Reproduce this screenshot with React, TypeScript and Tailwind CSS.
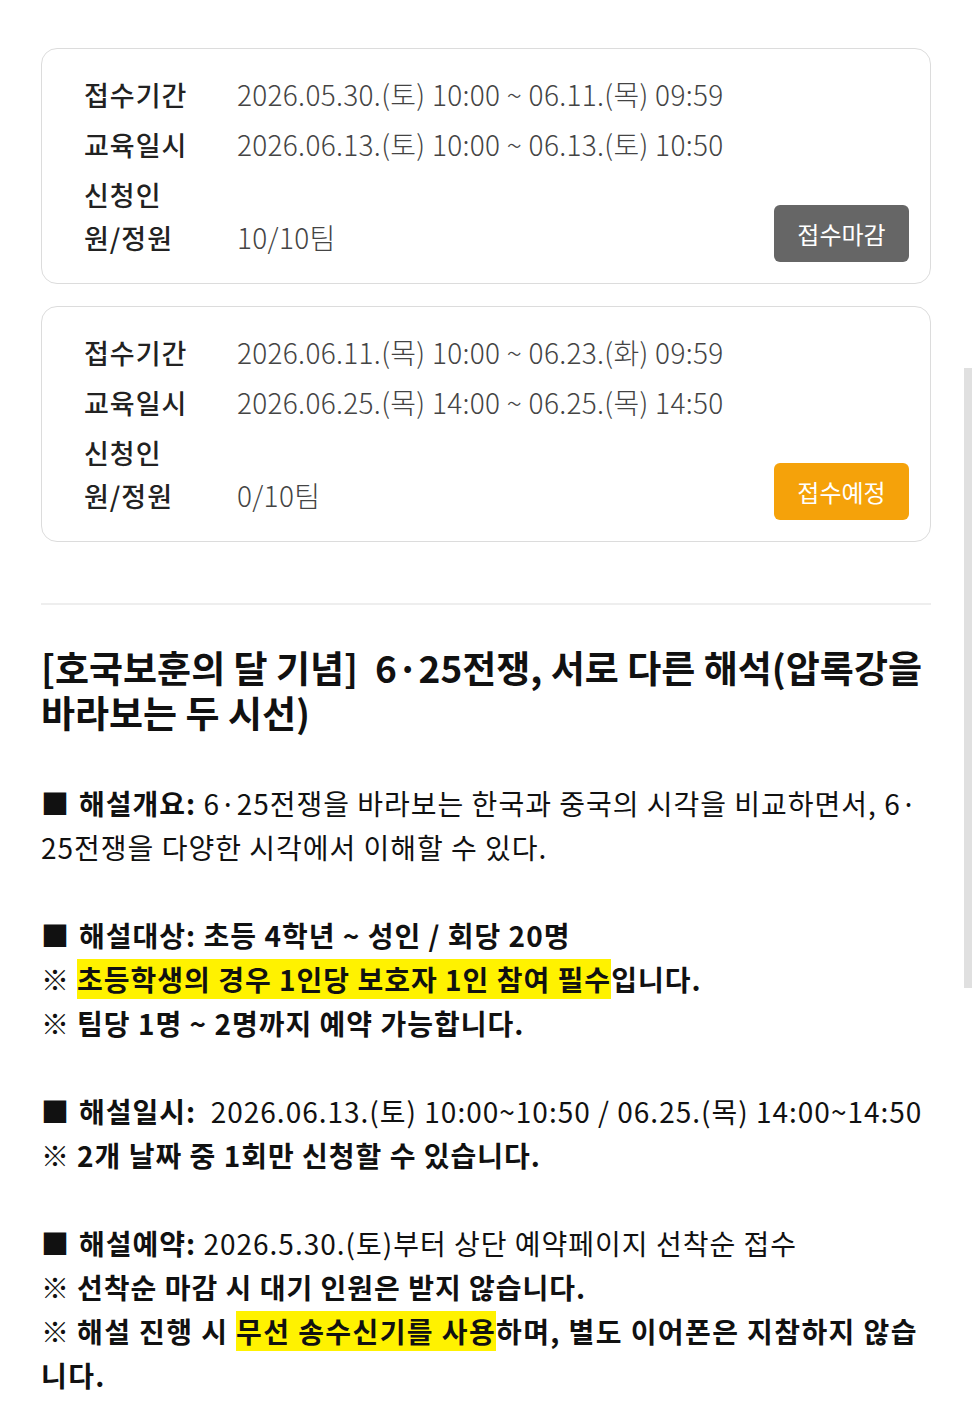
import clsx from "clsx";

type Session = {
  apply: string;
  edu: string;
  count: string;
  status: "closed" | "upcoming";
};

const sessions: Session[] = [
  {
    apply: "2026.05.30.(토) 10:00 ~ 06.11.(목) 09:59",
    edu: "2026.06.13.(토) 10:00 ~ 06.13.(토) 10:50",
    count: "10/10팀",
    status: "closed",
  },
  {
    apply: "2026.06.11.(목) 10:00 ~ 06.23.(화) 09:59",
    edu: "2026.06.25.(목) 14:00 ~ 06.25.(목) 14:50",
    count: "0/10팀",
    status: "upcoming",
  },
];

const font = "font-['Noto_Sans_CJK_KR','Noto_Sans',sans-serif]";

function SessionCard({ s }: { s: Session }) {
  const label = "w-[104px] shrink-0 text-[27px] font-medium tracking-[1px] text-[#222]";
  const value = "ml-[49px] text-[28px] font-light tracking-[0.3px] text-[#444]";
  return (
    <div className="rounded-2xl border border-[#dcdcdc] bg-white pl-[42px] pr-[21px] pt-6 pb-6">
      <div className="flex flex-col gap-[7px] leading-[43px]">
        <div className="flex">
          <span className={clsx(label, "whitespace-nowrap")}>접수기간</span>
          <span className={value}>{s.apply}</span>
        </div>
        <div className="flex">
          <span className={clsx(label, "whitespace-nowrap")}>교육일시</span>
          <span className={value}>{s.edu}</span>
        </div>
        <div className="flex items-end">
          <span className={label}>신청인원/정원</span>
          <span className={clsx(value, "flex-1")}>{s.count}</span>
          <button
            className={clsx(
              "-mb-[3px] h-[57px] w-[135px] rounded-md text-[24px] text-white",
              s.status === "closed" ? "bg-[#666666]" : "bg-[#f5a20a]"
            )}
          >
            {s.status === "closed" ? "접수마감" : "접수예정"}
          </button>
        </div>
      </div>
    </div>
  );
}

function Mark() {
  return <span className="mr-[10px] tracking-normal">■</span>;
}

function Note() {
  return <span className="mr-[8px] font-normal tracking-normal">※</span>;
}

function Hl({ children }: { children: React.ReactNode }) {
  return <span className="bg-[#fff200]">{children}</span>;
}

export default function App() {
  return (
    <div className={clsx("relative min-h-[1422px] bg-white px-[41px] pt-12 text-[#111]", font)}>
      <div className="flex flex-col gap-[22px]">
        {sessions.map((s, i) => (
          <SessionCard key={i} s={s} />
        ))}
      </div>

      <hr className="mt-[61px] border-t-2 border-[#eeeeee]" />

      <h1 className="mt-10 text-[37px] font-bold leading-[45px] text-[#111]">
        [호국보훈의 달 기념]&nbsp; 6·25전쟁, 서로 다른 해석(압록강을 바라보는 두 시선)
      </h1>

      <div className="mt-[46px] text-[28px] leading-[44px] tracking-[1px]">
        <p>
          <Mark />
          <b>해설개요:</b> 6·25전쟁을 바라보는 한국과 중국의 시각을 비교하면서, 6·<wbr />25전쟁을 다양한 시각에서 이해할 수 있다.
        </p>
        <p>&nbsp;</p>
        <p className="font-bold">
          <Mark />
          해설대상: 초등 4학년 ~ 성인 / 회당 20명
        </p>
        <p className="font-bold">
          <Note />
          <Hl>초등학생의 경우 1인당 보호자 1인 참여 필수</Hl>입니다.
        </p>
        <p className="font-bold">
          <Note />팀당 1명 ~ 2명까지 예약 가능합니다.
        </p>
        <p>&nbsp;</p>
        <p>
          <Mark />
          <b>해설일시:</b>&nbsp; 2026.06.13.(토) 10:00~10:50 / 06.25.(목) 14:00~14:50
        </p>
        <p className="font-bold">
          <Note />2개 날짜 중 1회만 신청할 수 있습니다.
        </p>
        <p>&nbsp;</p>
        <p>
          <Mark />
          <b>해설예약:</b> 2026.5.30.(토)부터 상단 예약페이지 선착순 접수
        </p>
        <p className="font-bold">
          <Note />선착순 마감 시 대기 인원은 받지 않습니다.
        </p>
        <p className="font-bold tracking-[1.4px]">
          <Note />해설 진행 시 <Hl>무선 송수신기를 사용</Hl>하며, 별도 이어폰은 지참하지 않습니다.
        </p>
      </div>

      {/* overlay scrollbar */}
      <div className="absolute right-0 top-[368px] h-[620px] w-[8px] bg-[#e0e0e0]" />
    </div>
  );
}
